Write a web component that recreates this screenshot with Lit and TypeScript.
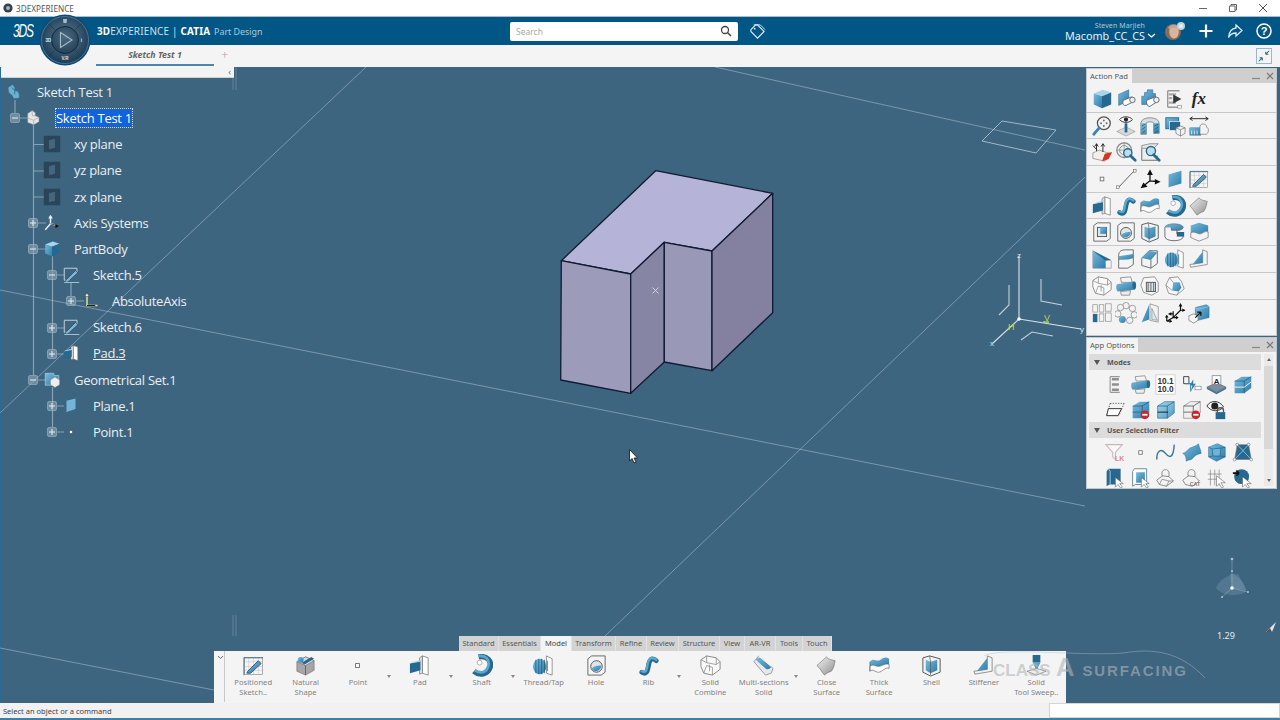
import { LitElement, html, css, svg } from "lit";
import { customElement } from "lit/decorators.js";

const S = "#5b6670";
const blue = "url(#gb)";
const lite = "#a9d5ec";
const dark = "#27688f";
const I: Record<string, any> = {
  cube: svg`<path d="M3 6 13 2 22 5 12 9Z" fill="${lite}"/><path d="M3 6 12 9V22L3 18Z" fill="${blue}"/><path d="M12 9 22 5V18L12 22Z" fill="${dark}"/>`,
  planePart: svg`<path d="M4 7 15 2V14L4 19Z" fill="${blue}" stroke="${dark}" stroke-width=".6"/><path d="M10 13 17 10C20 9 22 14 19 15.500L12 19C9 20 7 15 10 13Z" fill="#fff" stroke="${S}"/><ellipse cx="19" cy="13" rx="3" ry="3" fill="#eee" stroke="${S}"/>`,
  planePart2: svg`<path d="M3 9 6 9 6 5 9 5 9 2 15 2 15 6 18 6 18 13 8 18 3 18Z" fill="${blue}" stroke="${dark}" stroke-width=".6"/><path d="M9 13 17 10C20 9 22 14 19 15.500L12 20C9 21 7 15 9 13Z" fill="#fff" stroke="${S}"/><ellipse cx="19" cy="13" rx="3" ry="3" fill="#eee" stroke="${S}"/>`,
  treePlay: svg`<path d="M4 3H17M4 3V21M4 21H17" stroke="#999" stroke-width="1.500" fill="none"/><path d="M5 7H13M5 11H9M5 16H13" stroke="#aaa" stroke-width="2.500"/><path d="M10 7 19 12 10 17Z" fill="#33383c"/><rect x="15" y="19" width="4" height="3" fill="#fff" stroke="#888" stroke-width=".7"/>`,
  zoomDots: svg`<circle cx="14" cy="9" r="7" fill="#f1f5f8" stroke="#555" stroke-width="1.400"/><circle cx="11" cy="9" r="1" fill="#666"/><circle cx="17" cy="9" r="1" fill="#666"/><circle cx="14" cy="6" r="1" fill="#666"/><circle cx="14" cy="12" r="1" fill="#666"/><path d="M9 14 3 21" stroke="#3d85ad" stroke-width="3" stroke-linecap="round"/>`,
  eyePin: svg`<path d="M2 18 12 13 22 18 12 23Z" fill="#d8d8d8" stroke="#888" stroke-width=".6"/><path d="M12 9V19" stroke="${dark}" stroke-width="3"/><path d="M5 5C8 1 16 1 19 5 16 9 8 9 5 5Z" fill="#fff" stroke="#222"/><circle cx="12" cy="5" r="2.300" fill="#222"/>`,
  halfCyl: svg`<path d="M2 9C2 1 22 1 22 9V20H16V9C16 7 8 7 8 9V21H2Z" fill="#d6dee3" stroke="#666" stroke-width=".7"/><path d="M2 9H8V21H2ZM16 9H22V20H16Z" fill="${blue}"/><path d="M3 12 7 10M3 16 7 13M3 20 7 17M17 12 21 10M17 16 21 13M17 20 21 17" stroke="#164f72" stroke-width=".7"/>`,
  screens: svg`<rect x="2" y="3" width="14" height="12" fill="${blue}" stroke="${dark}"/><rect x="6" y="7" width="12" height="10" fill="${dark}" stroke="#fff" stroke-width=".7"/><path d="M13 14 18 12 23 14V20L18 23 13 20Z" fill="#f3f3f3" stroke="#666" stroke-width=".7"/><path d="M13 14 18 16 23 14M18 16V23" stroke="#666" stroke-width=".7" fill="none"/>`,
  dim: svg`<path d="M2 4H22M2 4 5 2M2 4 5 6M22 4 19 2M22 4 19 6" stroke="#222" fill="none"/><rect x="2" y="14" width="12" height="8" fill="${blue}" stroke="${dark}" stroke-width=".5"/><path d="M4 17V21M7 17V21M10 17V21" stroke="#fff" stroke-width=".8"/><path d="M13 12C15 8 21 10 20 13 23 14 23 19 20 21H13Z" fill="#f3f3f3" stroke="#666" stroke-width=".7"/>`,
  arrowsBox: svg`<path d="M2 13 9 10 22 14 15 22 2 19Z" fill="#f6efe9" stroke="#777" stroke-width=".7"/><path d="M12 22 15 14 23 12 19 20Z" fill="#d5321f"/><path d="M6 11V3M6 3 4 6M6 3 8 6M13 12V3M13 3 11 6M13 3 15 6" stroke="#222" fill="none"/><path d="M2 5 6 9" stroke="#222"/>`,
  circMag: svg`<circle cx="10" cy="10" r="8" fill="#eef2f5" stroke="#888" stroke-width="1.400"/><circle cx="10" cy="10" r="5" fill="none" stroke="#888"/><path d="M10 1V19M1 10H19" stroke="#888" stroke-width=".7"/><circle cx="14" cy="13" r="4.500" fill="#bcdcef" stroke="${dark}" stroke-width="1.500"/><path d="M17 16 22 21" stroke="${dark}" stroke-width="3" stroke-linecap="round"/>`,
  boxMag: svg`<path d="M3 5 12 3H21L16 8H3Z" fill="#e8e8e8" stroke="#666" stroke-width=".7"/><path d="M3 8V21H20V16" fill="#eee" stroke="#666"/><circle cx="13" cy="11" r="5" fill="#bcdcef" stroke="${dark}" stroke-width="1.500"/><path d="M16 15 22 21" stroke="${dark}" stroke-width="3" stroke-linecap="round"/>`,
  point: svg`<rect x="10" y="10" width="4" height="4" fill="#fff" stroke="#666" stroke-width=".9"/>`,
  line: svg`<path d="M4 21 21 3" stroke="#555" stroke-width="1"/><rect x="1.500" y="19.500" width="3" height="3" fill="#fff" stroke="#555" stroke-width=".6"/><rect x="20" y="1.500" width="3" height="3" fill="#fff" stroke="#555" stroke-width=".6"/>`,
  axis: svg`<path d="M12 14V3M12 3 10 7H14ZM12 14 22 15M22 15 18 13V17ZM12 14 3 21M3 21 8 20 5 17Z" stroke="#111" stroke-width="1.400" fill="#111"/>`,
  plane: svg`<path d="M5 7 19 3V17L5 21Z" fill="${blue}"/>`,
  sketch: svg`<rect x="2.500" y="3.500" width="19" height="18" fill="#f5f5f5" stroke="#777" stroke-width=".6"/><path d="M7 4V21M12 4V21M17 4V21M3 8H21M3 13H21M3 17H21" stroke="#cbb7b7" stroke-width=".5"/><path d="M2 4H22M2 4V22" stroke="${dark}" stroke-width=".9"/><path d="M6 18 17 7 20 10 9 20 5 20Z" fill="${blue}" stroke="#24465c" stroke-width=".8"/>`,
  pad: svg`<path d="M15 2 21 4V22L15 20Z" fill="#fff" stroke="#666" stroke-width=".7"/><path d="M12 4 15 2V20L12 21Z" fill="#e0e0e0" stroke="#666" stroke-width=".6"/><path d="M2 10 13 7V17L2 20Z" fill="${dark}"/><path d="M2 10 6 8 15 6 13 8Z" fill="${lite}"/>`,
  rib: svg`<path d="M5 19C10 22 11 18 12 12S15 3 20 7" fill="none" stroke="${dark}" stroke-width="5" stroke-linecap="round"/><path d="M5 18C10 20 10 17 11 11S15 2 20 6" fill="none" stroke="#5ba7ce" stroke-width="2.500" stroke-linecap="round"/>`,
  thick: svg`<path d="M2 8C6 3 9 9 13 6S19 3 22 5V11C18 9 15 13 11 13S5 10 2 13Z" fill="${blue}"/><path d="M2 13C5 10 8 13 11 13S18 9 22 11V15C18 13 15 19 11 19S5 15 2 18Z" fill="#fff" stroke="#666" stroke-width=".7"/><path d="M2 8V18" stroke="#666" stroke-width=".7"/>`,
  shaft: svg`<path d="M9 3C18 1 23 8 21 14S11 24 4 18" fill="none" stroke="${dark}" stroke-width="5.500"/><path d="M9 2C17 1 21 7 19 13S12 21 5 17" fill="none" stroke="#5ba7ce" stroke-width="2.800"/><circle cx="10" cy="9" r="2.500" fill="#fff" stroke="#666" stroke-width=".5"/>`,
  close: svg`<path d="M2 12 12 3C14 6 18 6 21 7 20 11 20 14 17 18 14 19 12 20 10 22 7 19 5 14 2 12Z" fill="url(#gg)" stroke="#666" stroke-width=".6"/>`,
  pocket: svg`<path d="M3 5 7 2H21V19L17 22H3Z" fill="#f4f4f4" stroke="#666"/><rect x="7" y="7" width="10" height="10" fill="#dfe6ea" stroke="#555"/><rect x="10" y="7" width="7" height="7" fill="${blue}"/>`,
  hole: svg`<path d="M3 5 7 2H21V19L17 22H3Z" fill="#f4f4f4" stroke="#666"/><circle cx="12" cy="13" r="6" fill="#dfe6ea" stroke="#555"/><path d="M7 15C10 12 14 12 17 12 17 18 9 20 7 15Z" fill="${blue}"/>`,
  shell: svg`<path d="M3 4 10 2 21 5V19L11 23 3 19Z" fill="#f2f2f2" stroke="#555"/><path d="M6 6 11 8 18 6V17L11 20 6 17Z" fill="${blue}"/><path d="M10 2 11 8V22" stroke="#555" fill="none" stroke-width=".7"/>`,
  groove: svg`<ellipse cx="11" cy="7" rx="10" ry="4" fill="${blue}" stroke="#666" stroke-width=".6"/><path d="M1 7V17C1 23 21 23 21 17V14H14V10H8V7" fill="#f5f5f5" stroke="#666"/><path d="M14 12H22V17H14Z" fill="${dark}"/>`,
  remove: svg`<path d="M3 5 12 2 22 5V12C18 10 15 15 12 14S6 11 3 13Z" fill="${blue}"/><path d="M3 13C6 11 9 13 12 14S18 10 22 12V18L12 22 3 18Z" fill="#f4f4f4" stroke="#666" stroke-width=".7"/>`,
  chamfer: svg`<path d="M2 3 22 14V22H2Z" fill="#f2f2f2" stroke="#666" stroke-width=".5"/><path d="M2 3 16 12V22H2Z" fill="${blue}"/><path d="M2 3 22 13 16 14Z" fill="${dark}"/>`,
  fillet: svg`<path d="M4 8C4 3 8 2 11 2H20V18L14 22H4Z" fill="#f4f4f4" stroke="#666"/><path d="M4 9C8 8 16 8 20 6V11C16 13 8 13 4 13Z" fill="${blue}"/>`,
  chamfer2: svg`<path d="M3 11 11 3H20V17L13 22 3 19Z" fill="#f4f4f4" stroke="#666"/><path d="M3 11 11 3 20 5 13 13Z" fill="${blue}"/><path d="M13 13V22" stroke="#666"/>`,
  thread: svg`<path d="M15 2 21 5V22L15 20Z" fill="#fff" stroke="#666" stroke-width=".7"/><ellipse cx="8" cy="13" rx="7" ry="8" fill="${blue}"/><path d="M4 6V20M7 5V21M10 5V21M13 6V20M16 7V18" stroke="#1f5e83" stroke-width=".8"/>`,
  stiffener: svg`<path d="M16 2 21 4V18L3 21 2 18 16 16Z" fill="#f3f3f3" stroke="#666" stroke-width=".7"/><path d="M16 4V16L5 18Z" fill="${blue}"/>`,
  outCombine: svg`<path d="M8 2 18 4 22 8V16L14 22 5 20 2 13V6Z" fill="#fafafa" stroke="#888"/><path d="M8 2 8 9 18 11V4M2 6 8 9M5 20 8 12 14 14V22M18 11 22 8M11 11V18" stroke="#888" fill="none" stroke-width=".8"/>`,
  combineBlue: svg`<path d="M6 3 17 2 19 8H7Z" fill="#f4f4f4" stroke="#666" stroke-width=".7"/><path d="M2 10 20 7C23 8 23 15 20 16L3 18C1 16 1 12 2 10Z" fill="${blue}"/><path d="M6 18 17 17 16 22H7Z" fill="#eee" stroke="#666" stroke-width=".7"/><ellipse cx="21" cy="11.500" rx="2" ry="4.500" fill="${dark}"/>`,
  outDrill: svg`<path d="M5 3 17 2 21 8V18L14 22 5 19 2 11Z" fill="#f7f7f7" stroke="#777" stroke-width=".8"/><rect x="8" y="8" width="10" height="10" fill="#d8e4ea" stroke="#555"/><path d="M10 8V18M13 8V18M16 8V18" stroke="#555" stroke-width=".9"/>`,
  outBlue: svg`<path d="M6 3 15 2 19 7 22 15 14 22 5 20 2 11Z" fill="#f7f7f7" stroke="#777" stroke-width=".8"/><path d="M10 8 17 8 19 14 16 18 9 17Z" fill="${blue}"/><path d="M6 3 10 8M2 11 9 17M14 22 16 18" stroke="#777" stroke-width=".7"/>`,
  pattern: svg`<g fill="#f4f4f4" stroke="#888" stroke-width=".7"><rect x="2" y="3" width="5" height="8"/><rect x="9" y="3" width="5" height="8"/><rect x="16" y="2" width="6" height="8"/><rect x="9" y="13" width="5" height="8"/><rect x="16" y="12" width="6" height="9"/></g><rect x="2" y="13" width="5" height="9" fill="${dark}"/>`,
  circPattern: svg`<g fill="#f3f3f3" stroke="#777" stroke-width=".7"><circle cx="12" cy="4" r="3.500"/><circle cx="19" cy="7" r="3.500"/><circle cx="21" cy="14" r="3.500"/><circle cx="16" cy="20" r="3.500"/><circle cx="6" cy="6" r="3.500"/><circle cx="3" cy="13" r="3.500"/></g><circle cx="8" cy="19" r="3.800" fill="${blue}"/>`,
  mirror: svg`<path d="M3 22 11 3V19Z" fill="${blue}"/><path d="M12 2 21 5V22L12 20Z" fill="#f2f2f2" stroke="#777" stroke-width=".7"/><path d="M14 19 14 7 20 20Z" fill="#d7e7ef" stroke="#777" stroke-width=".6"/>`,
  points: svg`<path d="M3 21 10 17 18 9M10 17V10M18 9V3M18 9H23M10 13H5M3 21V15M3 21H8M10 17H15" stroke="#111" stroke-width="1.300" fill="none"/><path d="M18 1 16 5H20ZM23 9 20 7V11ZM5 13 8 11V15ZM3 14 1 17H5ZM9 21 6 19V23ZM16 17 13 15V19Z" fill="#111"/>`,
  cubeTrans: svg`<path d="M8 6 20 3 23 5V17L11 20 8 18Z" fill="${blue}" stroke="${dark}" stroke-width=".5"/><path d="M8 6 11 8 23 5M11 8V20" stroke="#a9d5ec" stroke-width=".6" fill="none"/><path d="M1 15 6 13 11 15V20L6 23 1 20Z" fill="#f6f6f6" stroke="#666" stroke-width=".7"/><path d="M8 17 14 11M14 11H10M14 11V15" stroke="#111" stroke-width="1.400" fill="none"/>`,
  listIcon: svg`<path d="M7 3H18M7 3V21M7 21H18" stroke="#999" stroke-width="1.300" fill="none"/><path d="M9 6H17M9 12H17M9 18H17" stroke="#8f8f8f" stroke-width="3"/>`,
  num: svg`<rect x="1" y="1" width="22" height="22" fill="#fff" stroke="#bbb" stroke-width=".7"/><text x="12" y="11" class="numt" text-anchor="middle">10.1</text><text x="12" y="21" class="numt" text-anchor="middle">10.0</text>`,
  flash: svg`<path d="M3 3H9V11H3Z" fill="none" stroke="#333"/><path d="M5 11 11 11V20" stroke="#3c86ad" fill="none" stroke-width="1.200"/><path d="M14 6 10 13H13L11 20 17 11H14Z" fill="#2f80ad"/><rect x="16" y="14" width="7" height="4" fill="#fff" stroke="#777" stroke-width=".7"/>`,
  aPlate: svg`<path d="M1 15 12 10 23 15 12 21Z" fill="#7b8f9c" stroke="#445" stroke-width=".6"/><path d="M1 15V17L12 23 23 17V15L12 21Z" fill="#3e7396"/><rect x="7" y="2" width="10" height="10" fill="#fff" stroke="#667" stroke-width=".7"/><text x="12" y="11" class="at" text-anchor="middle">A</text>`,
  cubePlane: svg`<path d="M3 8 11 3 22 3V16L14 22H3Z" fill="${blue}"/><path d="M3 8 14 8 22 3M14 8V22" stroke="#174c6c" fill="none" stroke-width=".7"/><path d="M3 15 14 15 22 9" stroke="#fff" fill="none"/>`,
  dashPlane: svg`<path d="M7 5H23M3 19H17M7 5 3 19M23 5 17 19" stroke="#555" fill="none" stroke-dasharray="1.500 1.500"/><path d="M5 11H20L16 19H3Z" fill="#fff" stroke="#222"/>`,
  cubeRed: svg`<path d="M3 8 11 3 22 3V16L14 22H3Z" fill="${blue}"/><path d="M3 8 14 8 22 3M14 8V22M3 15H15" stroke="#174c6c" fill="none" stroke-width=".7"/><circle cx="17" cy="18" r="5" fill="#c9262c"/><rect x="14" y="17" width="6" height="2" fill="#fff"/>`,
  cubeWhiteRed: svg`<path d="M3 8 11 3 22 3V16L14 22H3Z" fill="#efefef" stroke="#777" stroke-width=".7"/><path d="M3 8 14 8 22 3M14 8V22M3 15H15" stroke="#222" fill="none" stroke-width=".7"/><circle cx="17" cy="18" r="5" fill="#c9262c"/><rect x="14" y="17" width="6" height="2" fill="#fff"/>`,
  cubeBluePlane: svg`<path d="M3 8 11 3 22 3V16L14 22H3Z" fill="url(#gl)" stroke="${dark}" stroke-width=".7"/><path d="M3 8 14 8 22 3M14 8V22" stroke="#174c6c" fill="none" stroke-width=".7"/><path d="M3 15H15" stroke="#111"/>`,
  eyeLock: svg`<path d="M1 8C5 1 15 1 20 9 15 15 6 15 1 8Z" fill="#f4f4f4" stroke="#222"/><circle cx="10" cy="8" r="4" fill="#222"/><rect x="11" y="15" width="11" height="8" fill="${dark}"/><path d="M13 15V13C13 9 20 9 20 13V15" fill="none" stroke="#555" stroke-width="1.500"/>`,
  funnel: svg`<path d="M2 3H21L13 12V20L10 17V12Z" fill="#fbf8f8" stroke="#c9b6b6" stroke-width="1.200"/><text x="18" y="22" class="lk" text-anchor="middle">LK</text>`,
  curve: svg`<path d="M2 20C2 8 8 8 12 13S21 20 22 3" fill="none" stroke="#3a7497" stroke-width="1.600"/>`,
  surf: svg`<path d="M2 13C6 12 8 8 10 7S17 5 20 2C21 7 23 9 23 13 17 14 15 17 13 19S8 20 6 22C6 18 5 14 2 13Z" fill="${blue}" stroke="${dark}" stroke-width=".5"/>`,
  wire: svg`<path d="M3 6 13 2 22 6V17L12 22 3 17Z" fill="${blue}" stroke="${dark}" stroke-width=".6"/><path d="M7 8 17 7 16 16 8 16ZM3 6 7 8M22 6 17 7M3 17 8 16M22 17 16 16" fill="#6eb4d8" stroke="#1d5a7e" stroke-width=".7"/>`,
  quad: svg`<path d="M6 3 19 3 22 20 3 20Z" fill="${dark}" stroke="#777" stroke-width=".7"/><path d="M6 3 22 20M19 3 3 20" stroke="#a9d5ec" stroke-width=".8"/><g fill="#fff" stroke="#555" stroke-width=".6"><circle cx="6" cy="3" r="1.600"/><circle cx="19" cy="3" r="1.600"/><circle cx="22" cy="20" r="1.600"/><circle cx="3" cy="20" r="1.600"/></g>`,
  bookCursor: svg`<path d="M3 5 5 2H19V20H6L3 22Z" fill="${dark}"/><path d="M5 2 7 5V20" stroke="#a9d5ec" fill="none"/><path d="M13 12V23L16 20 19 24 21 23 18 19H22Z" fill="#fff" stroke="#555" stroke-width=".6"/>`,
  bookWhite: svg`<path d="M3 5 5 2H19V20H6L3 22Z" fill="#fff" stroke="#5d7f95"/><path d="M7 6H17V18H7Z" fill="${blue}"/><path d="M13 12V23L16 20 19 24 21 23 18 19H22Z" fill="#fff" stroke="#555" stroke-width=".6"/>`,
  assemb: svg`<path d="M2 15 10 9 16 11 21 16 13 22 5 20Z" fill="#f3f3f3" stroke="#666" stroke-width=".8"/><path d="M8 6C9 2 15 2 16 6V11L8 10Z" fill="#f3f3f3" stroke="#666" stroke-width=".8"/><path d="M5 20 8 14 16 16 13 22M16 16 21 16" stroke="#666" fill="none" stroke-width=".7"/>`,
  assembC: svg`<path d="M2 15 10 9 16 11 21 16 13 22 5 20Z" fill="#f3f3f3" stroke="#666" stroke-width=".8"/><path d="M8 6C9 2 15 2 16 6V11L8 10Z" fill="#f3f3f3" stroke="#666" stroke-width=".8"/><text x="16" y="22" class="lk2" text-anchor="middle">CAT</text>`,
  gridCursor: svg`<path d="M2 8H18M2 14H18M5 3V21M10 3V21M15 3V21" stroke="#777" stroke-width=".7"/><path d="M12 10V22L15 19 18 24 20 23 17 18H22Z" fill="#fff" stroke="#555" stroke-width=".6"/>`,
  ballCursor: svg`<circle cx="11" cy="11" r="8.500" fill="${dark}"/><path d="M1 7H8M8 7 5 4M8 7 5 10" stroke="#111" stroke-width="1.800" fill="none"/><path d="M12 11V23L15 20 18 24 20 23 17 19H22Z" fill="#fff" stroke="#555" stroke-width=".6"/>`,
  naturalShape: svg`<path d="M3 8 12 3 21 7V17L12 22 3 18Z" fill="#a6a6a6" stroke="#666" stroke-width=".6"/><path d="M3 8 12 12 21 7 12 3Z" fill="#dadada" stroke="#666" stroke-width=".6"/><path d="M12 12V22" stroke="#666"/><path d="M8 9 18 3 21 5 11 11Z" fill="${dark}"/><circle cx="7" cy="6" r="3" fill="${blue}"/>`,
  multi: svg`<path d="M2 8 7 2 22 15 20 20 14 22Z" fill="#e9e9e9" stroke="#777" stroke-width=".7"/><path d="M4 6C6 3 9 4 10 5L20 13C19 16 16 16 15 16Z" fill="${blue}"/><path d="M7 2 20 13" stroke="#fff"/>`,
  toolSweep: svg`<rect x="8" y="1" width="8" height="8" fill="${dark}"/><path d="M8 9H16L13 15H11ZM11 15H13L12 20Z" fill="${blue}"/><path d="M2 18 12 15 22 18 12 22Z" fill="#eee" stroke="#777" stroke-width=".7"/>`,
  // tree icons
  tRoot: svg`<path d="M4 6 10 2 13 6V10L17 11 19 15 19 20 12 21 9 16 5 13Z" fill="#6eb0cf" stroke="#2f6f95" stroke-width=".8"/><path d="M9 6 13 10V15" stroke="#245b7c" fill="none"/>`,
  tPart: svg`<path d="M5 6 11 2 15 5V9L20 11V17L13 21 5 18Z" fill="#e6e6e6" stroke="#8b8b8b" stroke-width=".7"/><path d="M5 12 13 15 20 11M13 15V21M11 2V9L15 9" stroke="#999" fill="none" stroke-width=".8"/>`,
  tPlane: svg`<rect x="1" y="1" width="22" height="22" fill="#2b4558"/><path d="M8 7 16 5V17L8 19Z" fill="#44667f"/>`,
  tAxis: svg`<path d="M10 13 10 3M10 13 21 16M10 13 3 21" stroke="#e8eef2" stroke-width="2" fill="none"/><path d="M10 13 21 16M21 16 17 14V18Z" stroke="#111" fill="#111"/><path d="M10 1 7 6H13Z" fill="#eee"/>`,
  tSketch: svg`<path d="M3 3H20V8M3 3V19H10" stroke="#cfdbe3" fill="none" stroke-width="1.200"/><path d="M5 19 18 6 21 9 8 21 4 22Z" fill="#7cb7d6" stroke="#1c3c52" stroke-width=".8"/><path d="M3 22H23" stroke="#cfdbe3"/>`,
  tAbs: svg`<path d="M8 4V18H22" stroke="#e8e08a" stroke-width="2" fill="none"/><path d="M8 18H19" stroke="#111" stroke-width="1.200"/><path d="M8 1 5 6H11Z" fill="#eee" stroke="#111" stroke-width=".5"/>`,
  tGeo: svg`<path d="M3 3H14L15 6H21V19H3Z" fill="${blue}" stroke="#cfe3ee" stroke-width=".7"/><path d="M10 12 16 8 22 12 22 18 16 22 10 18Z" fill="#eee" stroke="#888" stroke-width=".6"/>`,
  tPlanePt: svg`<path d="M6 5 18 2V16L6 20Z" fill="#72b5d8"/>`,
  tDot: svg`<rect x="10.500" y="10.500" width="3" height="3" fill="#fff"/>`,
};
const ic = (n: string) => html`<svg class="ic" viewBox="0 0 24 24">${I[n]}</svg>`;
const fxIcon = html`<span class="fx">fx</span>`;

const pad = [
  ["cube", "planePart", "planePart2", "treePlay", "fx"],
  ["zoomDots", "eyePin", "halfCyl", "screens", "dim"],
  ["arrowsBox", "circMag", "boxMag"],
  ["point", "line", "axis", "plane", "sketch"],
  ["pad", "rib", "thick", "shaft", "close"],
  ["pocket", "hole", "shell", "groove", "remove"],
  ["chamfer", "fillet", "chamfer2", "thread", "stiffener"],
  ["outCombine", "combineBlue", "outDrill", "outBlue"],
  ["pattern", "circPattern", "mirror", "points", "cubeTrans"],
];
const modes = ["listIcon", "combineBlue", "num", "flash", "aPlate", "cubePlane", "dashPlane", "cubeRed", "cubeBluePlane", "cubeWhiteRed", "eyeLock"];
const filters = ["funnel", "point", "curve", "surf", "wire", "quad", "bookCursor", "bookWhite", "assemb", "assembC", "gridCursor", "ballCursor"];

const tree = [
  { l: 0, t: "Sketch Test 1", i: "tRoot" },
  { l: 1, t: "Sketch Test 1", i: "tPart", sel: true },
  { l: 2, t: "xy plane", i: "tPlane" },
  { l: 2, t: "yz plane", i: "tPlane" },
  { l: 2, t: "zx plane", i: "tPlane" },
  { l: 2, t: "Axis Systems", i: "tAxis" },
  { l: 2, t: "PartBody", i: "cube" },
  { l: 3, t: "Sketch.5", i: "tSketch" },
  { l: 4, t: "AbsoluteAxis", i: "tAbs" },
  { l: 3, t: "Sketch.6", i: "tSketch" },
  { l: 3, t: "Pad.3", i: "pad", u: true },
  { l: 2, t: "Geometrical Set.1", i: "tGeo" },
  { l: 3, t: "Plane.1", i: "tPlanePt" },
  { l: 3, t: "Point.1", i: "tDot" },
];

const tabs: [string, number][] = [["Standard", 40], ["Essentials", 42], ["Model", 31], ["Transform", 44], ["Refine", 31], ["Review", 32], ["Structure", 41], ["View", 25], ["AR-VR", 31], ["Tools", 27], ["Touch", 29]];
const tools = [
  { i: "sketch", t: ["Positioned", "Sketch.."] },
  { i: "naturalShape", t: ["Natural", "Shape"] },
  { i: "point", t: ["Point"], d: 1 },
  { i: "pad", t: ["Pad"], d: 1 },
  { i: "shaft", t: ["Shaft"], d: 1 },
  { i: "thread", t: ["Thread/Tap"] },
  { i: "hole", t: ["Hole"] },
  { i: "rib", t: ["Rib"], d: 1 },
  { i: "outCombine", t: ["Solid", "Combine"] },
  { i: "multi", t: ["Multi-sections", "Solid"], d: 1, w: 1 },
  { i: "close", t: ["Close", "Surface"] },
  { i: "thick", t: ["Thick", "Surface"] },
  { i: "shell", t: ["Shell"] },
  { i: "stiffener", t: ["Stiffener"] },
  { i: "toolSweep", t: ["Solid", "Tool Sweep.."] },
];

const exp = [
  [15, 118, 0], [33, 223, 1], [33, 249, 0], [52, 275, 0], [71, 301, 1], [52, 328, 1], [52, 354, 1], [33, 380, 0], [52, 406, 1], [52, 432, 1],
];

@customElement("app-root")
export class AppRoot extends LitElement {
  static styles = css`
    :host { display: block; width: 1280px; height: 720px; overflow: hidden; font-family: "Noto Sans", "Open Sans", sans-serif; position: relative; background: #3e6580; }
    * { box-sizing: border-box; }
    .defs { position: absolute; }
    .app { display: flex; flex-direction: column; height: 720px; }
    .titlebar { height: 17px; background: #fff; display: flex; align-items: center; padding-left: 3px; gap: 3px; border-bottom: 1px solid #a9bdca; font-size: 8.200px; color: #555; flex: none; }
    .winlogo { width: 10px; height: 10px; }
    .winbtns { margin-left: auto; display: flex; align-items: center; color: #555; }
    .winbtn { width: 10px; height: 10px; margin-right: 20px; }
    .winbtn.last { margin-right: 12px; }
    .header { height: 28px; background: #025685; display: flex; align-items: center; flex: none; color: #fff; }
    .ds { width: 44px; padding-left: 13px; font: italic 400 12px "Liberation Sans", sans-serif; letter-spacing: -1.200px; color: #fff; }
    .ds span { display: inline-block; transform: scaleY(1.500); }
    .brand { margin-left: 53px; font-size: 9.900px; color: #cfe3ee; white-space: nowrap; width: 413px; letter-spacing: .2px; }
    .brand b { color: #fff; font-weight: 700; }
    .brand .sub { color: #a9c9dc; margin-left: 1px; font-size: 8.900px; letter-spacing: 0; }
    .search { width: 228px; height: 19px; background: #fff; border-radius: 2px; display: flex; align-items: center; padding: 0 6px; font-size: 8.500px; color: #a8a8a8; justify-content: space-between; }
    .search svg { width: 12px; height: 12px; }
    .tag { width: 17px; height: 17px; margin-left: 11px; }
    .user { margin-left: auto; display: flex; flex-direction: column; align-items: flex-end; line-height: 1; margin-right: -1px; padding-top: 1px; }
    .user .who { font-size: 7px; color: #a9c9dc; margin-right: 11px; letter-spacing: .1px; }
    .user .org { font-size: 10.800px; color: #e6f0f6; display: flex; align-items: center; gap: 2px; margin-top: 2px; }
    .user .org svg { width: 9px; height: 7px; }
    .avatar { width: 24px; height: 24px; margin: 0 10px 0 8px; }
    .hbtn { width: 18px; height: 18px; margin-right: 11px; }
    .hbtn.last { margin-right: 7px; }
    .tabbar { height: 22px; background: #f4f4f4; flex: none; display: flex; align-items: stretch; padding-left: 96px; }
    .tab { width: 118px; height: 21px; border-bottom: 2px solid #4a86ad; font: italic 700 8.800px "Noto Sans", sans-serif; color: #666; text-align: center; line-height: 20px; }
    .plus { margin-left: 7px; font-size: 13px; color: #aaa; line-height: 20px; font-weight: 300; }
    .collapse { margin-left: auto; margin-right: 8px; width: 16px; height: 16px; align-self: center; border: 1px solid #9ab8cc; display: block; }
    .main { flex: 1; position: relative; background: #3e6580; border-left: 1px solid #2a6a96; min-height: 0; }
    .scene { position: absolute; left: -1px; top: 0; width: 1280px; height: 636px; }
    .treebar { position: relative; width: 233px; height: 11px; background: #f3f3f3; border-bottom: 1px solid #d0d0d0; color: #666; font-size: 9px; line-height: 9px; text-align: right; padding-right: 3px; }
    .tree { position: relative; padding-top: 1px; display: flex; flex-direction: column; }
    .row { height: 26.150px; display: flex; align-items: center; color: #e9eff3; font: 13px "Open Sans", "Noto Sans", sans-serif; letter-spacing: -.28px; white-space: nowrap; }
    .l0 { padding-left: 4px; } .l1 { padding-left: 23px; } .l2 { padding-left: 42px; } .l3 { padding-left: 61px; } .l4 { padding-left: 80px; }
    .ti { width: 18px; height: 18px; display: block; flex: none; }
    .tl { margin-left: 13px; }
    .l0 .tl { margin-left: 14px; }
    .l1 .tl { margin-left: 14px; }
    .sel { background: #1262dc; color: #fff; outline: 1px dotted #c9d9e8; height: 18px; line-height: 18px; }
    .u { text-decoration: underline; }
    .float { position: absolute; background: #f3f3f3; border: 1px solid #bfc8ce; left: 1085px; width: 191px; }
    .action { top: 1px; height: 268px; }
    .options { top: 270px; height: 152px; overflow: hidden; }
    .fhead { height: 14px; background: #cfcfcf; display: flex; align-items: stretch; font-size: 7.600px; color: #555; }
    .ftab { background: #f3f3f3; padding: 0 4px 0 3px; line-height: 14px; }
    .fbtns { margin-left: auto; display: flex; align-items: center; gap: 6px; padding-right: 2px; color: #777; }
    .fbtns svg { width: 8px; height: 8px; }
    .irows { padding-top: 3px; }
    .irow { height: 26.700px; display: flex; align-items: center; padding-left: 4px; border-bottom: 1px solid #c9c9c9; gap: 2px; }
    .irow:last-child { border: 0; }
    .cell { width: 22.200px; height: 22px; display: flex; align-items: center; justify-content: center; }
    .cell .ic { width: 22px; height: 22px; }
    .ic { display: block; }
    .fx { font: italic 700 17px "Liberation Serif", serif; color: #222; }
    .numt { font: 700 9.500px "Liberation Sans", sans-serif; fill: #333; }
    .at { font: 700 9px "Liberation Sans", sans-serif; fill: #222; }
    .lk { font: 700 8px "Liberation Sans", sans-serif; fill: #d78b8b; }
    .lk2 { font: 700 6px "Liberation Sans", sans-serif; fill: #777; }
    .obody { display: flex; gap: 0; padding: 2px 3px 0 2px; }
    .ocol { flex: 1; min-width: 0; padding-right: 3px; }
    .ohead { height: 16px; background: #dcdcdc; display: flex; align-items: center; gap: 4px; font: 700 7.200px "Noto Sans", sans-serif; color: #555; padding-left: 5px; }
    .ohead i { width: 0; height: 0; border: 3px solid transparent; border-top: 5px solid #555; border-bottom: 0; margin-right: 3px; }
    .ogrid { display: grid; grid-template-columns: repeat(6, 25.500px); justify-content: start; justify-items: center; align-items: center; grid-auto-rows: 25px; padding: 2px 0 0 13px; }
    .ogrid .ic { width: 21px; height: 21px; }
    .scroll { width: 9px; height: 132px; background: #eaeaea; position: relative; flex: none; display: flex; flex-direction: column; align-items: center; justify-content: space-between; padding: 4px 0; }
    .scroll::before { content: ""; position: absolute; left: 0; right: 0; top: 12px; height: 83px; background: #d8d8d8; }
    .scroll span { width: 0; height: 0; border: 2.500px solid transparent; }
    .scroll .up { border-bottom: 3px solid #666; border-top: 0; }
    .scroll .dn { border-top: 3px solid #666; border-bottom: 0; }
    .dock { position: absolute; left: 213px; bottom: 0; width: 852px; display: flex; flex-direction: column; }
    .rtabs { display: flex; padding-left: 245px; height: 15px; align-items: stretch; }
    .rtab { background: #d3d3d3; font-size: 7.500px; color: #555; line-height: 15px; text-align: center; border-right: 1px solid #e2e2e2; white-space: nowrap; }
    .rtab.on { background: #f4f4f4; color: #444; }
    .ribbon { height: 52px; background: #f4f4f4; display: flex; padding-left: 13px; position: relative; }
    .chev { position: absolute; left: 2px; top: 0; height: 51px; width: 9px; border-right: 1px solid #c8c8c8; }
    .chev svg { width: 7px; height: 5px; display: block; margin: 4px 0 0 1px; }
    .tool { width: 52.400px; display: flex; flex-direction: column; align-items: center; padding-top: 3px; flex: none; }
    .tool .ic { width: 23px; height: 23px; flex: none; }
    .tool .lb { margin-top: 0; font-size: 7.600px; line-height: 10px; color: #838383; text-align: center; white-space: nowrap; }
    .tool.wide { width: 54.500px; }
    .drop { width: 9.500px; flex: none; padding-top: 24px; display: flex; justify-content: center; }
    .drop i { width: 0; height: 0; border: 2.500px solid transparent; border-top: 3px solid #888; border-bottom: 0; }
    .status { height: 17px; background: #f1f1f1; flex: none; border-bottom: 2px solid #3f7fa6; display: flex; align-items: flex-start; justify-content: space-between; font-size: 7.500px; color: #444; padding-left: 3px; line-height: 16px; }
    .status .inp { width: 231px; height: 15px; background: #fff; border: 1px solid #d5d5d5; }
    .compass { position: absolute; left: 39px; top: 14px; width: 52px; height: 52px; }
    .comp-t { font: 700 4.500px "Liberation Sans", sans-serif; fill: #dfe8ee; }
    .mark { position: absolute; left: 993px; top: 659px; display: flex; align-items: baseline; white-space: nowrap; color: rgba(175,180,185,.6); font: 700 17px "Liberation Sans", sans-serif; line-height: 17px; }
    .mark .a { font-size: 26px; margin-left: 5px; }
    .mark .s { font-size: 15px; letter-spacing: 1.900px; margin-left: 8px; }
    .arc { position: absolute; left: 980px; top: 640px; width: 230px; height: 40px; }
    .zoom { font: 9px "Noto Sans", sans-serif; fill: #e3ebf0; }
    .ax { font: 8px "Liberation Sans", sans-serif; fill: #dfe7ec; }
    .axg { font: 9px "Liberation Sans", sans-serif; fill: #b7d55b; }
  `;

  private scene() {
    return html`<svg class="scene" viewBox="0 67 1280 636">
      <g stroke="#a9c0cf" stroke-opacity=".55" fill="none" stroke-width="1">
        <path d="M0 290 1085 506"/><path d="M0 413 366 67"/><path d="M605 636 1085 177"/>
        <path d="M715 67 1085 150"/><path d="M0 648 214 690"/>
        <path d="M982 141 1002 121 1056 130 1036 153Z" stroke-opacity=".9"/>
        <path d="M233 67V90M236 67V90M233 615V636M236 615V636" stroke-opacity=".35"/>
      </g>
      <g stroke="#101a33" stroke-width="1.300" stroke-linejoin="round">
        <path d="M561.300 260.700 655.700 170.700 772.700 193.300 712 251 664.300 242.300 630.700 274Z" fill="#b5b3d7"/>
        <path d="M561.300 260.700 630.700 274V393.300L560.700 380Z" fill="#9d9bba"/>
        <path d="M630.700 274 664.300 242.300V362L630.700 393.300Z" fill="#8785a4"/>
        <path d="M664.300 242.300 712 251V370.700L664.300 362Z" fill="#9a98b7"/>
        <path d="M712 251 772.700 193.300V312.700L712 370.700Z" fill="#83819f"/>
      </g>
      <path d="M652.500 287.500 658.500 293.500M658.500 287.500 652.500 293.500" stroke="#dfe2ee" stroke-width=".8"/>
      <g stroke="#d8e2e9" fill="none" stroke-width="1.100">
        <path d="M1019 319V256M1019 319 1081 329M1019 319 993 343"/>
        <path d="M1009 285V305L999 315M1041 279V301L1062 305M1021 340 1032 332 1053 336" stroke-opacity=".85"/>
      </g>
      <path d="M1008 329 1014 324M1043 322H1049" stroke="#b7d55b" stroke-width="1.500"/>
      <circle cx="1019" cy="319" r="1.800" fill="#fff"/>
      <text class="ax" x="1017" y="258">z</text><text class="ax" x="1080" y="332">y</text><text class="ax" x="990" y="346">x</text>
      <text class="axg" x="1044" y="321">V</text><text class="axg" x="1008" y="330">H</text>
      <g fill="#a9c4d6">
        <path d="M1216 588C1219 580 1228 576 1232 574 1240 576 1247 586 1246 592 1238 597 1222 596 1216 588Z" fill-opacity=".2"/>
        <path d="M1230 574 1238 574 1246 590 1232 588Z" fill-opacity=".18"/>
        <circle cx="1232" cy="559" r="1.300"/><circle cx="1232" cy="571" r="1"/><circle cx="1248" cy="592" r="1"/><circle cx="1222" cy="597" r="1"/>
        <path d="M1232 560V588M1232 588 1248 592M1232 588 1222 597" stroke="#a9c4d6" stroke-width=".7" stroke-opacity=".6"/>
      </g>
      <circle cx="1232" cy="588" r="1.800" fill="#fff"/>
      <text class="zoom" x="1217" y="639">1.29</text>
      <path d="M1266 632 1276 622 1272 632Z" fill="#e8e8e8"/><path d="M1266 632 1272 632 1270 628Z" fill="#555"/>
      <g stroke="#bccad4" stroke-opacity=".6" fill="none" stroke-width="1.200">
        <path d="M15 100V113M33.500 125V375M20 118H28M33.500 144.500H45M33.500 171H45M33.500 197H45M38 223H46M38 249H46"/>
        <path d="M52.500 256V350M57 275H64M71 283V296M76 301H84M57 328H64M57 354H64M38 380H46M52.500 387V427M57 406H64M57 432H64"/>
      </g>
      ${exp.map(([x, y, p]) => svg`<g>
        <rect x="${x - 4.500}" y="${y - 4.500}" width="9" height="9" rx="1.500" fill="#8ea6b6" fill-opacity=".6" stroke="#b6c6d1" stroke-opacity=".7" stroke-width=".7"/>
        <path d="${p ? `M${x - 3} ${y}H${x + 3}M${x} ${y - 3}V${y + 3}` : `M${x - 3} ${y}H${x + 3}`}" stroke="#e8eef2"/>
      </g>`)}
      <path d="M629.500 449.500V461L632 458.500 634 463 636 462 634 458H637.500Z" fill="#fff" stroke="#111" stroke-width=".8"/>
    </svg>`;
  }

  render() {
    return html`
      <svg width="0" height="0" class="defs"><defs>
        <linearGradient id="gb" x1="0" y1="0" x2="1" y2="1"><stop offset="0" stop-color="#75bbdf"/><stop offset="1" stop-color="#2f7aa5"/></linearGradient>
        <linearGradient id="gl" x1="0" y1="0" x2="1" y2="1"><stop offset="0" stop-color="#a5d6ee"/><stop offset="1" stop-color="#4f9bc4"/></linearGradient>
        <linearGradient id="gg" x1="0" y1="0" x2="1" y2="1"><stop offset="0" stop-color="#f3f3f3"/><stop offset="1" stop-color="#8e8e8e"/></linearGradient>
        <radialGradient id="gc" cx=".5" cy=".45" r=".6"><stop offset="0" stop-color="#5d7f96"/><stop offset=".6" stop-color="#33536b"/><stop offset="1" stop-color="#143450"/></radialGradient>
        <radialGradient id="gi" cx=".5" cy=".4" r=".7"><stop offset="0" stop-color="#4b6c84"/><stop offset="1" stop-color="#1d3b52"/></radialGradient>
      </defs></svg>
      <div class="app">
        <div class="titlebar">
          <svg class="winlogo" viewBox="0 0 10 10"><circle cx="5" cy="5" r="4.600" fill="#34414c"/><circle cx="5" cy="5" r="2" fill="#9fb3c1"/></svg>
          <span>3DEXPERIENCE</span>
          <div class="winbtns">
            <svg class="winbtn" viewBox="0 0 10 10"><path d="M1 5.500H9" stroke="#666"/></svg>
            <svg class="winbtn" viewBox="0 0 10 10"><path d="M1.500 3H7V8.500H1.500ZM3 3V1.500H8.500V7H7" fill="none" stroke="#666"/></svg>
            <svg class="winbtn last" viewBox="0 0 10 10"><path d="M1 1 9 9M9 1 1 9" stroke="#555"/></svg>
          </div>
        </div>
        <div class="header">
          <span class="ds"><span>3DS</span></span>
          <span class="brand"><b>3D</b>EXPERIENCE | <b>CATIA</b> <span class="sub">Part Design</span></span>
          <div class="search"><span>Search</span>
            <svg viewBox="0 0 12 12"><circle cx="5" cy="5" r="3.500" fill="none" stroke="#444" stroke-width="1.300"/><path d="M7.500 7.500 11 11" stroke="#444" stroke-width="1.500"/></svg>
          </div>
          <svg class="tag" viewBox="0 0 18 18"><path d="M2 7 7 2 9 2 16 9 9 16 2 9Z" fill="none" stroke="#dcebf3" stroke-width="1.200"/><path d="M5 2 12 2 17 7" fill="none" stroke="#dcebf3"/><circle cx="6" cy="6" r="1" fill="#dcebf3"/></svg>
          <div class="user">
            <span class="who">Steven Marjieh</span>
            <span class="org">Macomb_CC_CS<svg viewBox="0 0 9 7"><path d="M1 2 4.500 5 8 2" fill="none" stroke="#fff" stroke-width="1.300"/></svg></span>
          </div>
          <svg class="avatar" viewBox="0 0 24 24"><circle cx="10" cy="13" r="8" fill="#8a6a58"/><ellipse cx="11" cy="13" rx="4.800" ry="6.500" fill="#d9b49c"/><path d="M5 9C7 5 13 4 16 8L15 10C12 8 9 8 7 10Z" fill="#b9a79a"/><circle cx="18" cy="7" r="4" fill="#c1d3de"/><circle cx="18" cy="7" r="2" fill="#e8eef2"/></svg>
          <svg class="hbtn" viewBox="0 0 18 18"><path d="M9 2.500V15.500M2.500 9H15.500" stroke="#fff" stroke-width="2.200"/></svg>
          <svg class="hbtn" viewBox="0 0 18 18"><path d="M10 3 16 8.500 10 14V11C6.500 11 4 12.500 2.500 15.500 3 10 6 6.500 10 6Z" fill="none" stroke="#dcebf3" stroke-width="1.300"/></svg>
          <svg class="hbtn last" viewBox="0 0 18 18"><circle cx="9" cy="9" r="7" fill="none" stroke="#fff" stroke-width="1.500"/><text x="9" y="13" text-anchor="middle" font-family="Liberation Sans" font-weight="700" font-size="11" fill="#fff">?</text></svg>
        </div>
        <div class="tabbar">
          <div class="tab">Sketch Test 1</div>
          <span class="plus">+</span>
          <svg class="collapse" viewBox="0 0 16 16"><path d="M10 6 14 2M10 6V3M10 6H13M6 10 2 14M6 10V13M6 10H3" stroke="#255f86" stroke-width="1.200" fill="none"/></svg>
        </div>
        <div class="main">
          ${this.scene()}
          <div class="treebar">‹</div>
          <div class="tree">
            ${tree.map(
              (r) => html`<div class="row l${r.l}">
                <svg class="ti" viewBox="0 0 24 24">${I[r.i]}</svg>
                <span class="tl ${r.sel ? "sel" : ""} ${r.u ? "u" : ""}">${r.t}</span>
              </div>`
            )}
          </div>
          <div class="float action">
            <div class="fhead"><span class="ftab">Action Pad</span>
              <span class="fbtns"><svg viewBox="0 0 8 8"><path d="M0 6.500H8" stroke="#888" stroke-width="1.200"/></svg><svg viewBox="0 0 8 8"><path d="M1 1 7 7M7 1 1 7" stroke="#777" stroke-width="1.200"/></svg></span>
            </div>
            <div class="irows">
            ${pad.map(
              (r) => html`<div class="irow">${r.map((n) => html`<span class="cell">${n === "fx" ? fxIcon : ic(n)}</span>`)}</div>`
            )}
            </div>
          </div>
          <div class="float options">
            <div class="fhead"><span class="ftab">App Options</span>
              <span class="fbtns"><svg viewBox="0 0 8 8"><path d="M0 6.500H8" stroke="#888" stroke-width="1.200"/></svg><svg viewBox="0 0 8 8"><path d="M1 1 7 7M7 1 1 7" stroke="#777" stroke-width="1.200"/></svg></span>
            </div>
            <div class="obody">
              <div class="ocol">
                <div class="ohead"><i></i>Modes</div>
                <div class="ogrid">${modes.map((n) => ic(n))}</div>
                <div class="ohead"><i></i>User Selection Filter</div>
                <div class="ogrid">${filters.map((n) => ic(n))}</div>
              </div>
              <div class="scroll"><span class="up"></span><span class="dn"></span></div>
            </div>
          </div>
          <div class="dock">
            <div class="rtabs">${tabs.map(([t, w]) => html`<span class="rtab ${t === "Model" ? "on" : ""}" style="width:${w}px">${t}</span>`)}</div>
            <div class="ribbon">
              <div class="chev"><svg viewBox="0 0 7 5"><path d="M1 1 3.500 3.500 6 1" fill="none" stroke="#666"/></svg></div>
              ${tools.map(
                (t) => html`<div class="tool ${t.w ? "wide" : ""}">${ic(t.i)}<div class="lb">${t.t.map((l) => html`<div>${l}</div>`)}</div></div>${t.d ? html`<div class="drop"><i></i></div>` : ""}`
              )}
            </div>
          </div>
        </div>
        <div class="status"><span>Select an object or a command</span><div class="inp"></div></div>
      </div>
      <svg class="compass" viewBox="0 0 52 52">
        <circle cx="26" cy="26" r="25.500" fill="#0e4b75"/>
        <circle cx="26" cy="26" r="23.500" fill="url(#gc)" stroke="#7f9db2" stroke-width=".5"/>
        <path d="M26 3V15M26 37V49M3 26H15M37 26H49" stroke="#1b3850" stroke-width=".6" transform="rotate(45 26 26)"/>
        <circle cx="26" cy="26" r="13.500" fill="url(#gi)" stroke="#14293b"/>
        <path d="M21.500 18.500 33 26 21.500 33.500Z" fill="none" stroke="#a7bccb" stroke-width="1.100"/>
        <text class="comp-t" x="9.500" y="28" text-anchor="middle">3D</text>
        <text class="comp-t" x="26" y="46" text-anchor="middle">V.R</text>
        <text class="comp-t" x="42.500" y="28" text-anchor="middle">i</text>
        <path d="M24 5H28L27.500 9H24.500Z" fill="#a7bccb"/>
      </svg>
      <svg class="arc" viewBox="980 640 230 40"><path d="M984 656C1000 646 1100 658 1130 652 1160 648 1185 656 1205 678" fill="none" stroke="rgba(175,185,195,.45)"/></svg>
      <div class="mark"><span>CLASS</span><span class="a">A</span><span class="s">SURFACING</span></div>
    `;
  }
}
